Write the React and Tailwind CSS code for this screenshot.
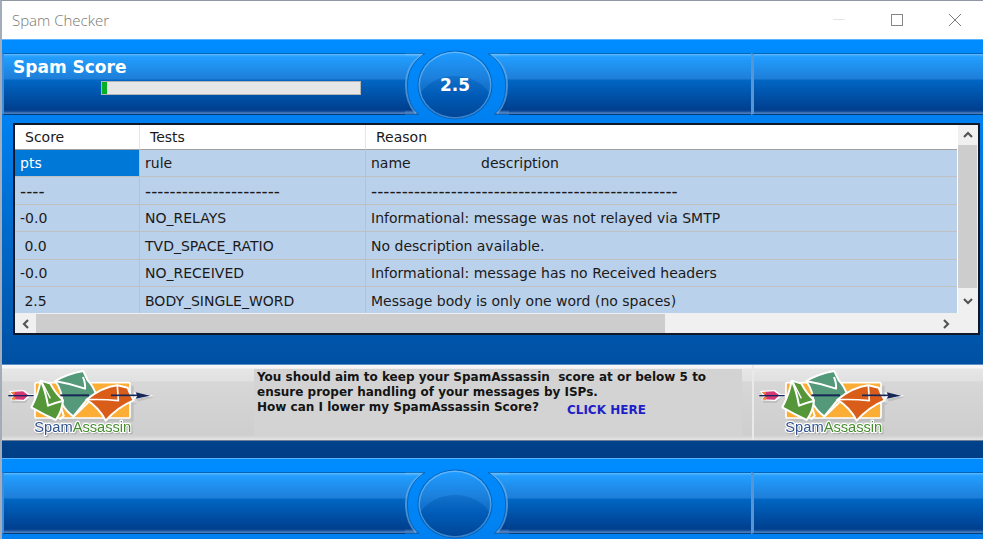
import React from "react";

const HEADERS = ["Score", "Tests", "Reason"];

const ROWS = [
  ["pts", "rule", null],
  ["----", "----------------------", "--------------------------------------------------"],
  ["-0.0", "NO_RELAYS", "Informational: message was not relayed via SMTP"],
  [" 0.0", "TVD_SPACE_RATIO", "No description available."],
  ["-0.0", "NO_RECEIVED", "Informational: message has no Received headers"],
  [" 2.5", "BODY_SINGLE_WORD", "Message body is only one word (no spaces)"],
];

function TitleBar() {
  return (
    <div className="flex h-[38px] items-center justify-between bg-white pr-[22px] pl-[10px]">
      <h1 className="font-['Open_Sans',sans-serif] text-[15px] font-light text-[#777772]">Spam Checker</h1>
      <div className="flex items-center gap-[46px]">
        <button type="button" aria-label="Minimize" className="h-3 w-3">
          <svg viewBox="0 0 12 12" className="block h-3 w-3">
            <path d="M0 5.5H12" stroke="#e4e4e4" />
          </svg>
        </button>
        <button type="button" aria-label="Maximize" className="h-3 w-3">
          <svg viewBox="0 0 12 12" className="block h-3 w-3">
            <rect x="0.5" y="0.5" width="11" height="11" fill="none" stroke="#858585" />
          </svg>
        </button>
        <button type="button" aria-label="Close" className="h-3 w-3">
          <svg viewBox="0 0 12 12" className="block h-3 w-3">
            <path d="M0 0L12 12M12 0L0 12" stroke="#7a7a7a" />
          </svg>
        </button>
      </div>
    </div>
  );
}

const PANEL =
  "h-[62px] border-t border-b border-t-[#0066bd] border-b-[#003f7c] bg-[linear-gradient(to_bottom,#6fc0ff_0px,#45adff_1px,#229eff_3px,#1e7ed8_25px,#0066c4_26px,#003f8e_56px,#1f56a2_58px,#5585c2_59px,#3a70b0_60px)]";

function Ornament({ id, children }) {
  return (
    <div className="relative flex h-[81px] w-[104px] shrink-0 items-center justify-center">
      <svg viewBox="0 0 104 81" className="absolute inset-0 h-full w-full" aria-hidden="true">
        <defs>
          <linearGradient id={`${id}-panel`} gradientUnits="userSpaceOnUse" x1="0" y1="15" x2="0" y2="75">
            <stop offset="0" stopColor="#6fc0ff" />
            <stop offset="0.05" stopColor="#229eff" />
            <stop offset="0.41" stopColor="#1e7ed8" />
            <stop offset="0.43" stopColor="#0066c4" />
            <stop offset="0.93" stopColor="#003f8e" />
            <stop offset="0.98" stopColor="#5585c2" />
            <stop offset="1" stopColor="#3a70b0" />
          </linearGradient>
          <linearGradient id={`${id}-ball`} x1="0" y1="0" x2="0" y2="1">
            <stop offset="0" stopColor="#1f9bff" />
            <stop offset="0.38" stopColor="#1c80dc" />
            <stop offset="0.7" stopColor="#0864bc" />
            <stop offset="1" stopColor="#0858ae" />
          </linearGradient>
          <linearGradient id={`${id}-shade`} x1="0" y1="0" x2="0" y2="1">
            <stop offset="0" stopColor="#1272cc" />
            <stop offset="0.3" stopColor="#005cb8" />
            <stop offset="0.7" stopColor="#004596" />
          </linearGradient>
          <linearGradient id={`${id}-rim`} x1="0" y1="0" x2="0" y2="1">
            <stop offset="0" stopColor="#62b8ff" />
            <stop offset="1" stopColor="#3c80c8" />
          </linearGradient>
          <clipPath id={`${id}-clip`}>
            <ellipse cx="50" cy="46" rx="35" ry="32" />
          </clipPath>
        </defs>
        <path d="M0 14H20C7 22 2 34 2 46C2 59 6 69 14 76H0Z" fill={`url(#${id}-panel)`} />
        <path d="M104 14H83C96 22 101 34 101 46C101 59 97 69 89 76H104Z" fill={`url(#${id}-panel)`} />
        <g fill="none" stroke="#79b4ea" opacity="0.600">
          <path d="M17 16C6 23 1 34 1 46C1 59 5 68 11 74.500" strokeWidth="2" />
          <path d="M86 16C97 23 102 34 102 46C102 59 98 68 92 74.500" strokeWidth="2" />
        </g>
        <g fill="none" stroke="#0060b4" opacity="0.800">
          <path d="M0 14.500H20C7 22.500 2.500 34 2.500 46C2.500 59 6 69 14 75.500H0" />
          <path d="M104 14.500H83C96 22.500 100.500 34 100.500 46C100.500 59 97 69 89 75.500H104" />
        </g>
        <ellipse cx="50" cy="46" rx="37.500" ry="34.500" fill="#0064bc" />
        <ellipse cx="50" cy="46" rx="36.500" ry="33.500" fill={`url(#${id}-rim)`} />
        <ellipse cx="50" cy="46" rx="35" ry="32" fill={`url(#${id}-ball)`} />
        <ellipse cx="50" cy="67" rx="38" ry="30" fill={`url(#${id}-shade)`} clipPath={`url(#${id}-clip)`} />
      </svg>
      {children}
    </div>
  );
}

function Chrome({ id, children, score }) {
  return (
    <div className="flex h-[81px] items-start overflow-hidden border-t border-[#5bb4ff] bg-linear-to-b from-[#008cff] to-[#0080f0]">
      <div className="flex w-full items-start">
        <div className="w-[403px] shrink-0 pt-[13px]">
          <div className={`${PANEL} border-l-2 border-l-[#3d8ee0]`}>{children}</div>
        </div>
        <div className="-mt-px shrink-0">
          <Ornament id={id}>{score}</Ornament>
        </div>
        <div className="w-[242px] shrink-0 pt-[13px]">
          <div className={PANEL} />
        </div>
        <div className="min-w-0 flex-1 pt-[13px]">
          <div className={`${PANEL} border-l-3 border-l-[#5796d6]`} />
        </div>
      </div>
    </div>
  );
}

function Arrow({ label, d, className }) {
  return (
    <button type="button" aria-label={label} className={`flex shrink-0 items-center justify-center bg-[#f0f0f0] ${className}`}>
      <svg viewBox="0 0 10 10" className="h-[10px] w-[10px]">
        <path d={d} fill="none" stroke="#555" strokeWidth="2.200" />
      </svg>
    </button>
  );
}

function ResultsTable() {
  return (
    <div className="mr-[3px] ml-[11px] border-2 border-[#101828] bg-[#f0f0f0] font-['DejaVu_Sans',Verdana,sans-serif] text-[14px] text-[#1a1a1a]">
      <div className="flex h-[188px]">
        <div className="min-w-0 flex-1 overflow-hidden border-r border-white bg-[#bad1eb]">
          <table className="w-full table-fixed border-separate border-spacing-0">
            <colgroup>
              <col className="w-[125px]" />
              <col className="w-[226px]" />
              <col />
            </colgroup>
            <thead>
              <tr>
                {HEADERS.map((h) => (
                  <th
                    key={h}
                    scope="col"
                    className="h-[25px] border-r border-b border-r-[#e5e5e5] border-b-[#a0a0a0] bg-white pt-px pb-0 pl-[10px] text-left leading-[23px] font-normal last:border-r-0"
                  >
                    {h}
                  </th>
                ))}
              </tr>
            </thead>
            <tbody>
              {ROWS.map((row, r) => (
                <tr key={r} className="odd:h-[27px] even:h-[28px]">
                  {row.map((cell, c) => (
                    <td
                      key={c}
                      className={`border-r border-b border-[#c0c0c0] pt-px pb-0 pl-[5px] leading-[25px] whitespace-pre last:border-r-0 ${
                        r === 0 && c === 0 ? "bg-[#0078d7] text-white" : ""
                      } ${r === 1 ? "text-[17px]" : ""}`}
                    >
                      {cell ?? (
                        <span className="flex">
                          <span className="w-[110px]">name</span>
                          <span>description</span>
                        </span>
                      )}
                    </td>
                  ))}
                </tr>
              ))}
            </tbody>
          </table>
        </div>
        <div className="flex w-5 shrink-0 flex-col pr-px">
          <Arrow label="Scroll up" d="M1 7L5 3L9 7" className="h-5" />
          <div className="h-[143px] bg-[#cdcdcd]" />
          <Arrow label="Scroll down" d="M1 3L5 7L9 3" className="h-[25px]" />
        </div>
      </div>
      <div className="flex h-5 pt-px pr-[22px]">
        <Arrow label="Scroll left" d="M7 1L3 5L7 9" className="w-[21px]" />
        <div className="flex-1">
          <div className="h-full w-[70%] bg-[#cdcdcd]" />
        </div>
        <Arrow label="Scroll right" d="M3 1L7 5L3 9" className="w-[21px]" />
      </div>
    </div>
  );
}

function Logo() {
  return (
    <svg viewBox="18 10 441 213" className="h-[71px] w-[147px] shrink-0" role="img" aria-label="SpamAssassin">
      <g fill="#b4b4b4" opacity="0.600">
        <path d="M108 60H398V168H108Z" />
        <path d="M100 132L168 176L190 112Z" />
        <path d="M264 110L320 174L408 112Z" />
        <path d="M404 88L458 95L410 108Z" />
        <path d="M30 104H74L88 94L74 112H34Z" />
      </g>
      <rect x="102" y="51" width="285" height="106" rx="4" fill="#fbad35" stroke="#fff" strokeWidth="5" />
      <path d="M178 118L188 150L176 162M262 110L214 156" fill="none" stroke="#fff" strokeWidth="6" />
      <g stroke="#fff" strokeWidth="6" strokeLinejoin="round">
        <path d="M163 46Q200 24 247 16L260 44Q276 60 286 88L258 102L217 152Q196 138 184 116Q186 80 163 46Z" fill="#55997b" />
        <path d="M165 47Q208 54 252 69Q254 54 246 34" fill="none" />
      </g>
      <path d="M178 89H264" stroke="#172858" strokeWidth="6" />
      <g stroke="#fff" strokeWidth="6" strokeLinejoin="round">
        <path d="M119 45L148 54Q162 82 186 104Q182 140 164 163Q128 146 91 125Q112 86 119 45Z" fill="#549638" />
        <path d="M121 49Q134 78 141 120Q160 112 184 106" fill="none" />
        <path d="M123 49L148 98" fill="none" strokeWidth="4" />
      </g>
      <g stroke="#fff" strokeWidth="6" strokeLinejoin="round">
        <path d="M256 102Q304 64 349 59L380 66Q386 84 398 104Q350 124 314 165Q294 126 256 102Z" fill="#d95c18" />
        <path d="M258 102Q306 100 352 105L349 60" fill="none" strokeWidth="5" />
      </g>
      <path d="M398 80L458 90L398 101Z" fill="#fff" />
      <path d="M330 89H412" stroke="#172858" strokeWidth="5" />
      <path d="M404 80L448 90L404 99L409 90Z" fill="#172858" />
      <path d="M24 76L68 73L86 86H100V94H86L70 106L28 104L34 90Z" fill="#fff" />
      <path d="M30 79L66 77L82 89L68 102L31 101L40 90Z" fill="#d43676" />
      <path d="M30 79H42L40 86H36ZM31 101L38 94H44L42 102Z" fill="#f28528" />
      <path d="M22 90H98" stroke="#172858" strokeWidth="4" />
      <text
        x="100"
        y="199"
        fontFamily="'Liberation Sans', Arial, sans-serif"
        fontSize="44"
        strokeLinejoin="round"
        stroke="#fff"
        strokeWidth="7"
        paintOrder="stroke"
        fill="#33538c"
        className="drop-shadow-[3px_3px_1px_#aaaaaa]"
      >
        Spam<tspan fill="#478c30">Assassin</tspan>
      </text>
    </svg>
  );
}

function AdviceBand() {
  return (
    <div className="mt-[29px] flex h-[77px] border-y border-t-[#5f8fc4] border-b-[#6d7f96] bg-[linear-gradient(to_bottom,#f6f6f6_0px,#f6f6f6_3px,#e7e7e7_4px,#e0e0e0_16px,#d7d7d7_17px,#cecece_70px,#e4e4e4_75px)]">
      <div className="flex w-[750px] shrink-0 items-start pt-1">
        <div className="w-[252px] shrink-0 pl-[5px]">
          <Logo />
        </div>
        <div className="h-[67px] w-[488px] bg-[#d3d3d3] pt-px pl-[3px] font-['DejaVu_Sans',Verdana,sans-serif] text-[12px] leading-[15px] font-bold whitespace-pre text-[#141414]">
          <p>{"You should aim to keep your SpamAssassin  score at or below 5 to"}</p>
          <p>ensure proper handling of your messages by ISPs.</p>
          <div className="flex items-start">
            <p>How can I lower my SpamAssassin Score?</p>
            <a href="#lower-score" className="ml-7 pt-[3px] text-[#1f1fc8]">
              CLICK HERE
            </a>
          </div>
        </div>
      </div>
      <div className="min-w-0 flex-1 border-l-2 border-[#e9e9e9] pt-1 pl-1">
        <Logo />
      </div>
    </div>
  );
}

export default function App() {
  return (
    <div className="border-t border-l-2 border-t-[#8f97a3] border-l-[#a3adb9] bg-[#003f86]">
      <TitleBar />
      <Chrome
        id="top"
        score={
          <output className="relative pt-3 pr-1 font-['DejaVu_Sans',Verdana,sans-serif] text-[17px] leading-none font-bold text-white">
            2.5
          </output>
        }
      >
        <div className="pl-[9px] font-['DejaVu_Sans',Verdana,sans-serif] text-white">
          <label htmlFor="spam-score" className="block h-[27px] text-[17px] leading-[26px] font-bold">
            Spam Score
          </label>
          <progress
            id="spam-score"
            value="2"
            max="100"
            className="ml-[88px] block h-[14px] w-[260px] appearance-none border border-[#b4b4b4] bg-[#e6e6e6] [&::-webkit-progress-bar]:bg-[#e6e6e6] [&::-webkit-progress-value]:bg-[#06b025]"
          />
        </div>
      </Chrome>
      <main className="bg-linear-to-b from-[#0080f0] to-[#003f86] pt-[3px] pb-[17px]">
        <ResultsTable />
        <AdviceBand />
      </main>
      <Chrome id="bottom" />
    </div>
  );
}
